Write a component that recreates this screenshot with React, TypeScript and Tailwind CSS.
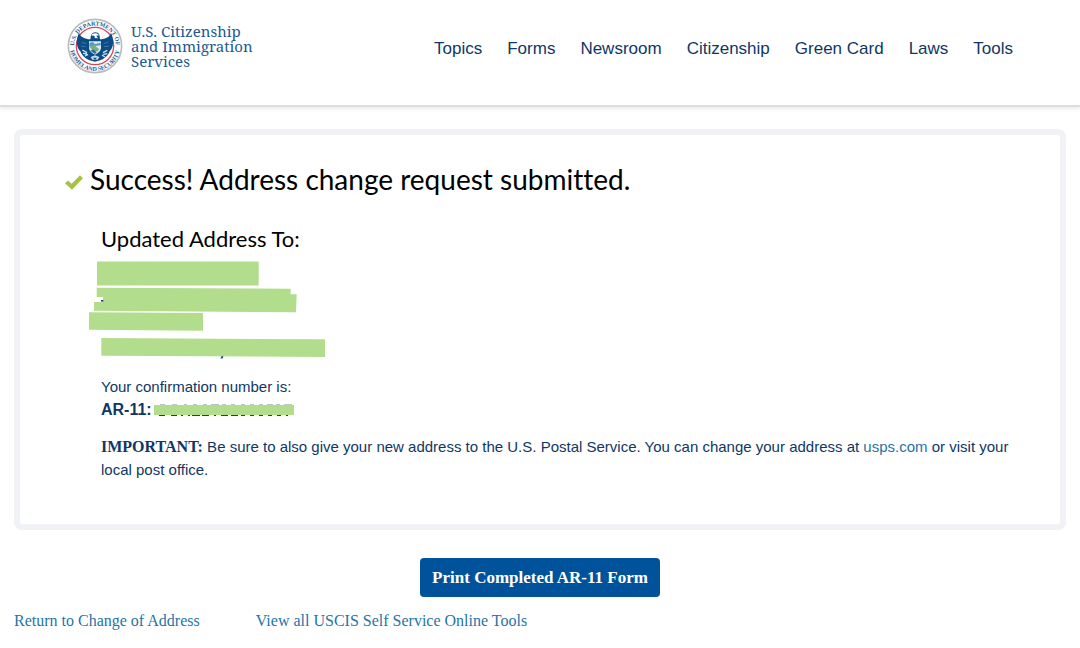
const navLinks = ["Topics", "Forms", "Newsroom", "Citizenship", "Green Card", "Laws", "Tools"];

const Seal = () => (
  <svg viewBox="0 0 168 168" className="w-14 h-14 shrink-0" aria-hidden="true">
    <defs>
      <path id="sealTop" d="M 22 97 A 63 63 0 1 1 146 97" />
      <path id="sealBottom" d="M 9 84 A 75 75 0 0 0 159 84" />
    </defs>
    <circle cx="84" cy="84" r="80" fill="#fff" stroke="#b9bcbe" strokeWidth="5" />
    <circle cx="84" cy="84" r="56" fill="#fff" stroke="#d2485a" strokeWidth="4" />
    <g fill="#1d5a90" fontFamily="Liberation Serif, serif" fontSize="18" fontWeight="700">
      <text textAnchor="middle">
        <textPath href="#sealTop" startOffset="50%">U.S. DEPARTMENT OF</textPath>
      </text>
      <text textAnchor="middle">
        <textPath href="#sealBottom" startOffset="50%">HOMELAND SECURITY</textPath>
      </text>
    </g>
    <path
      d="M36 44 C40 58 54 62 70 64 L72 52 C76 40 93 40 97 50 L99 64 C116 62 128 58 132 44 C142 66 140 88 128 100 C122 116 108 128 84 131 C60 128 46 116 40 100 C28 88 26 66 36 44 Z"
      fill="#0b4c86"
    />
    <path d="M72 52 C76 45 91 43 96 52 L88 53 L93 61 L83 60 L83 54 Z" fill="#fff" />
    <path d="M44 72 l14 5 M42 84 l14 2 M124 72 l-14 5 M126 84 l-14 2" stroke="#3f79a9" strokeWidth="3" />
    <path d="M66 70 L102 70 L102 88 C102 100 92 106 84 110 C76 106 66 100 66 88 Z" fill="#dcebf4" />
    <path d="M67 76 L76 71 L84 78 L101 74 L101 82 L67 86 Z" fill="#5d98c2" />
    <path d="M67 88 L80 80 L97 94 L90 101 L76 95 Z" fill="#7eaf72" />
    <path d="M70 98 L79 94 L89 103 L84 108 Z" fill="#2b6ea6" />
    <path
      d="M46 96 l14 8 M48 106 l12 2 M54 114 l9 -5 M108 104 l13 -7 M109 109 l12 -2 M105 111 l9 6"
      stroke="#d5e4ef"
      strokeWidth="4"
    />
    <path d="M71 117 L84 112 L97 117 L92 125 L76 125 Z" fill="#c9dbe8" />
    <path d="M78 119 h12 l-6 7 z" fill="#0b4c86" />
  </svg>
);

const CheckMark = () => (
  <svg viewBox="0 0 54 44" className="w-[18px] h-[15px] shrink-0 mt-1.5" aria-hidden="true">
    <path d="M0 24 L9 16 L20 26 L45 0 L54 9 L21 44 Z" fill="#a9c145" />
  </svg>
);

const HiddenAddress = () => (
  <svg viewBox="89 261 237 98" className="w-[237px] h-[98px] -ml-3 mt-2" role="img" aria-label="Address hidden">
    <g fill="#b2dd8c">
      <path d="M97 261.5 H258.7 V285.5 H97 Z" />
      <path d="M96.7 287.8 L290.7 288.7 V294.3 H296.7 L296 312.2 L94 310.7 V302 H103 V297 H96.7 Z" />
      <path d="M89 312.3 L203 313 V330.7 L89 329.7 Z" />
      <path d="M101.3 338 L325 339.3 V357 L101.3 355.7 Z" />
    </g>
    <g fill="#173f70">
      <path d="M101 300 h2.3 v1.6 h-2.3 z" />
      <path d="M221.5 356.3 h2 l-1 2.2 h-2 z" />
    </g>
  </svg>
);

const HiddenNumber = () => (
  <svg viewBox="0 0 140 14" className="w-[140px] h-[14px] shrink-0 ml-0.5" role="img" aria-label="Number hidden">
    <path
      d="M6 2 h5 M18 2 h5 M30 2 h3 M39 2 h4 M49 2 h4 M57 2 h8 M68 2 h4 M77 2 h4 M87 2 h4 M96 2 h4 M105 2 h4 M113 2 h6 M122 2 h4 M130 2 h8"
      stroke="#6f8f86"
      strokeWidth="1"
    />
    <path
      d="M5 12 h6 M17 12 h6 M27 12 h2 M34 12 h2 M38 12 h8 M48 12 h7 M60 12 h2 M67 12 h7 M77 12 h7 M87 12 h4 M96 12 h4 M105 12 h4 M114 12 h4 M123 12 h4 M132 12 h2"
      stroke="#173f70"
      strokeWidth="2"
    />
    <rect y="2" width="140" height="10" fill="#b2dd8c" />
  </svg>
);

const Header = () => (
  <header className="flex items-center justify-between gap-6 px-[67px] pt-[18px] pb-[31px] border-b-2 border-[#dedede] shadow-[0_2px_4px_rgba(0,0,0,0.08)]">
    <a href="#" className="flex items-center gap-2 font-['Noto_Serif','Liberation_Serif',serif] text-[#1d5a90]">
      <Seal />
      <span className="text-[15px] leading-[15px]">
        U.S. Citizenship
        <br />
        and Immigration
        <br />
        Services
      </span>
    </a>
    <nav>
      <ul className="flex items-center gap-[25px] text-[17px] leading-6 text-[#0f3765] mt-1.5">
        {navLinks.map((link) => (
          <li key={link}>
            <a href="#">{link}</a>
          </li>
        ))}
      </ul>
    </nav>
  </header>
);

const App = () => {
  return (
    <div className="bg-white font-['Liberation_Sans',Arial,sans-serif]">
      <Header />
      <main className="px-[14px] pt-[22px]">
        <section className="border-[6px] border-[#f1f2f6] rounded-lg px-[45px] pt-[26px] pb-[43px]">
          <h1 className="flex items-center gap-[7px] font-['Lato',sans-serif] text-[28px] leading-9 text-black [font-variant-ligatures:none]">
            <CheckMark />
            Success! Address change request submitted.
          </h1>
          <div className="pl-9 pt-7 text-[15px] leading-[23px] text-[#0f3765]">
            <h2 className="font-['Lato',sans-serif] text-[22px] leading-7 text-black">Updated Address To:</h2>
            <HiddenAddress />
            <p className="mt-4">Your confirmation number is:</p>
            <p className="flex items-center text-base leading-[23px] font-bold">
              AR-11:
              <HiddenNumber />
            </p>
            <p className="mt-[14px]">
              <strong className="font-['Liberation_Serif',serif] text-base leading-[22px]">IMPORTANT:</strong> Be sure to
              also give your new address to the U.S. Postal Service. You can change your address at{" "}
              <a href="#" className="text-[#1f74a8]">
                usps.com
              </a>{" "}
              or visit your local post office.
            </p>
          </div>
        </section>
        <div className="flex justify-center pt-7 font-['Liberation_Serif',serif]">
          <button className="bg-[#00539b] rounded px-3 py-2 text-[17px] leading-[23px] font-bold text-white">
            Print Completed AR-11 Form
          </button>
        </div>
        <div className="flex gap-14 pt-3 font-['Liberation_Serif',serif] text-base text-[#1f74a8]">
          <a href="#">Return to Change of Address</a>
          <a href="#">View all USCIS Self Service Online Tools</a>
        </div>
      </main>
    </div>
  );
};

export default App;
